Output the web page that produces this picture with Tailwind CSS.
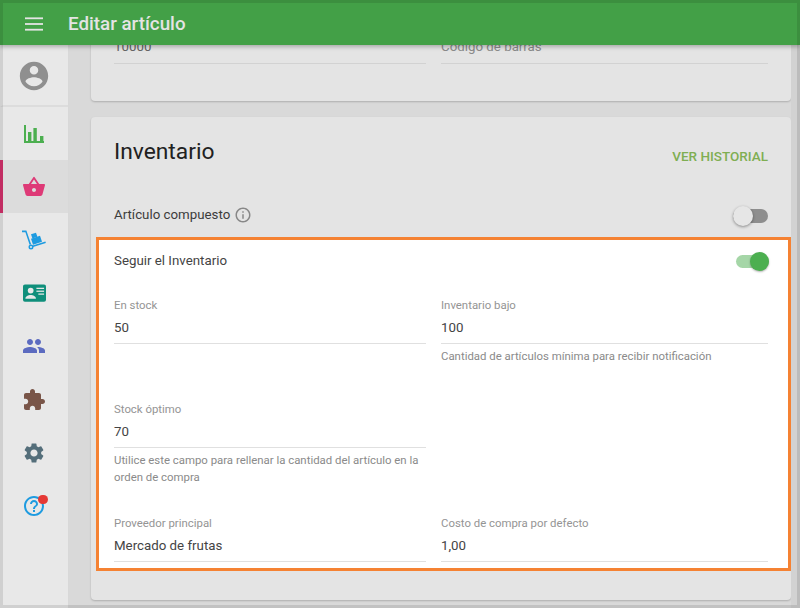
<!DOCTYPE html>
<html lang="es">
  <head>
    <meta charset="UTF-8" />
    <title>Editar artículo</title>
    <script src="https://cdn.jsdelivr.net/npm/@tailwindcss/browser@4"></script>
  </head>
  <body class="overflow-hidden">
    <div class="relative w-[800px] h-[608px] overflow-hidden bg-[#d9d9d9] font-['Roboto',sans-serif] text-[#212121]">
      <!-- Top bar -->
      <header class="relative z-10 h-[45px] pt-[3px] flex items-center bg-[#43a047] shadow-[0_2px_4px_rgba(0,0,0,0.25)]">
        <svg class="ml-[25px] w-[18px] h-[18px] text-[#e4e4e4]" viewBox="0 0 18 18" fill="currentColor">
          <rect x="0" y="2.4" width="18" height="1.8"></rect>
          <rect x="0" y="8.1" width="18" height="1.8"></rect>
          <rect x="0" y="13.8" width="18" height="1.8"></rect>
        </svg>
        <h1 class="ml-[25px] text-[18.8px] font-medium text-[#e4e4e4]">Editar artículo</h1>
      </header>

      <div class="flex h-[563px]">
        <!-- Sidebar -->
        <nav class="w-[69px] shrink-0 bg-[#e8e8e8] border-r border-[#d8d8d8] flex flex-col">
          <div class="h-[62px] pt-[2px] pr-[3px] flex items-center justify-center border-l-[3px] border-l-transparent border-b-2 border-b-[#dcdcdc]">
            <svg class="w-[34px] h-[34px] text-[#8f8f8f]" viewBox="0 0 24 24" fill="currentColor">
              <path d="M12 2C6.48 2 2 6.48 2 12s4.48 10 10 10 10-4.48 10-10S17.52 2 12 2zm0 3c1.66 0 3 1.34 3 3s-1.34 3-3 3-3-1.34-3-3 1.34-3 3-3zm0 14.2c-2.5 0-4.71-1.28-6-3.22.03-1.99 4-3.08 6-3.08 1.99 0 5.97 1.09 6 3.08-1.29 1.94-3.5 3.22-6 3.22z"></path>
            </svg>
          </div>
          <div class="h-[53.2px] pr-[3px] flex items-center justify-center border-l-[3px] border-l-transparent">
            <svg class="w-[20px] h-[18px] text-[#4caf50]" viewBox="0 0 20 18" fill="currentColor">
              <path d="M0 0h2v16h18v2H0z"></path>
              <rect x="4" y="7" width="3.4" height="10"></rect>
              <rect x="9.4" y="3" width="3.4" height="14"></rect>
              <rect x="16" y="11" width="3.4" height="6"></rect>
            </svg>
          </div>
          <div class="h-[53.2px] pr-[3px] flex items-center justify-center bg-[#dcdcdc] border-l-[3px] border-l-[#d9336f]">
            <svg class="w-[24px] h-[24px] text-[#de3a77]" viewBox="0 0 24 24" fill="currentColor">
              <path d="M17.21 9l-4.38-6.56a1 1 0 0 0-1.66 0L6.79 9H2c-.55 0-1 .45-1 1l.04.27 2.54 9.27c.23.84 1 1.46 1.92 1.46h13c.92 0 1.69-.62 1.93-1.46l2.54-9.27L23 10c0-.55-.45-1-1-1h-4.79zM9 9l3-4.4L15 9H9zm3 8c-1.1 0-2-.9-2-2s.9-2 2-2 2 .9 2 2-.9 2-2 2z"></path>
            </svg>
          </div>
          <div class="h-[53.2px] pr-[3px] flex items-center justify-center border-l-[3px] border-l-transparent">
            <svg class="w-[24px] h-[20px] text-[#1e9be0]" viewBox="0 0 24 20" fill="currentColor">
              <path d="M0 .6h4.4l4.7 13.6-1.5.5L3.4 2.2H0z"></path>
              <path d="M9 8.8l9-3 2 6-9 3z"></path>
              <path d="M9 4.3l5-1.6 1.4 4-5 1.7z"></path>
              <path d="M10.6 15.4L23.4 11.6l.5 1.5-12.8 3.8z"></path>
              <path fill-rule="evenodd" d="M9 14.6a2.5 2.5 0 1 1 0 5 2.5 2.5 0 0 1 0-5zm0 1.5a1 1 0 1 0 0 2 1 1 0 0 0 0-2z"></path>
            </svg>
          </div>
          <div class="h-[53.2px] pr-[3px] flex items-center justify-center border-l-[3px] border-l-transparent">
            <svg class="w-[23px] h-[18px]" viewBox="0 0 24 18">
              <rect width="24" height="18" rx="2" fill="#0f8f7b"></rect>
              <circle cx="8" cy="6.5" r="3" fill="#e8e8e8"></circle>
              <path d="M2.5 15c0-2.6 3-3.8 5.5-3.8s5.5 1.2 5.5 3.8z" fill="#e8e8e8"></path>
              <rect x="14" y="3.5" width="8" height="1.3" fill="#e8e8e8"></rect>
              <rect x="14" y="6.5" width="8" height="1.3" fill="#e8e8e8"></rect>
              <rect x="16" y="9.5" width="6" height="1.3" fill="#e8e8e8"></rect>
            </svg>
          </div>
          <div class="h-[53.2px] pr-[3px] flex items-center justify-center border-l-[3px] border-l-transparent">
            <svg class="w-[24px] h-[24px] text-[#5c6bc0]" viewBox="0 0 24 24" fill="currentColor">
              <path d="M16 11c1.66 0 2.99-1.34 2.99-3S17.66 5 16 5s-3 1.34-3 3 1.34 3 3 3zm-8 0c1.66 0 2.99-1.34 2.99-3S9.66 5 8 5 5 6.34 5 8s1.34 3 3 3zm0 2c-2.33 0-7 1.17-7 3.5V19h14v-2.5c0-2.33-4.67-3.5-7-3.5zm8 0c-.29 0-.62.02-.97.05 1.16.84 1.97 1.97 1.97 3.45V19h6v-2.5c0-2.33-4.67-3.5-7-3.5z"></path>
            </svg>
          </div>
          <div class="h-[53.2px] pr-[3px] flex items-center justify-center border-l-[3px] border-l-transparent">
            <svg class="w-[24px] h-[24px] text-[#795548]" viewBox="0 0 24 24" fill="currentColor">
              <path d="M20.5 11H19V7c0-1.1-.9-2-2-2h-4V3.5C13 2.12 11.88 1 10.5 1S8 2.12 8 3.5V5H4c-1.1 0-1.99.9-1.99 2v3.8H3.5c1.49 0 2.7 1.21 2.7 2.7s-1.21 2.7-2.7 2.7H2V20c0 1.1.9 2 2 2h3.8v-1.5c0-1.49 1.21-2.7 2.7-2.7 1.49 0 2.7 1.21 2.7 2.7V22H17c1.1 0 2-.9 2-2v-4h1.5c1.38 0 2.5-1.12 2.5-2.5S21.88 11 20.5 11z"></path>
            </svg>
          </div>
          <div class="h-[53.2px] pr-[3px] flex items-center justify-center border-l-[3px] border-l-transparent">
            <svg class="w-[24px] h-[24px] text-[#546e7a]" viewBox="0 0 24 24" fill="currentColor">
              <path d="M19.14 12.94c.04-.3.06-.61.06-.94 0-.32-.02-.64-.07-.94l2.03-1.58a.49.49 0 0 0 .12-.61l-1.92-3.32a.488.488 0 0 0-.59-.22l-2.39.96c-.5-.38-1.03-.7-1.62-.94l-.36-2.54a.484.484 0 0 0-.48-.41h-3.84c-.24 0-.43.17-.47.41l-.36 2.54c-.59.24-1.13.57-1.62.94l-2.39-.96c-.22-.08-.47 0-.59.22L2.74 8.87c-.12.21-.08.47.12.61l2.03 1.58c-.05.3-.09.63-.09.94s.02.64.07.94l-2.03 1.58a.49.49 0 0 0-.12.61l1.92 3.32c.12.22.37.29.59.22l2.39-.96c.5.38 1.03.7 1.62.94l.36 2.54c.05.24.24.41.48.41h3.84c.24 0 .44-.17.47-.41l.36-2.54c.59-.24 1.13-.56 1.62-.94l2.39.96c.22.08.47 0 .59-.22l1.92-3.32c.12-.22.07-.47-.12-.61l-2.01-1.58zM12 15.6c-1.98 0-3.6-1.62-3.6-3.6s1.62-3.6 3.6-3.6 3.6 1.62 3.6 3.6-1.62 3.6-3.6 3.6z"></path>
            </svg>
          </div>
          <div class="h-[53.2px] pr-[3px] flex items-center justify-center border-l-[3px] border-l-transparent">
            <div class="relative w-[24px] h-[24px]">
              <svg class="w-[24px] h-[24px] text-[#1e9be0]" viewBox="0 0 24 24" fill="currentColor">
                <path d="M11 18h2v-2h-2v2zm1-16C6.48 2 2 6.48 2 12s4.48 10 10 10 10-4.48 10-10S17.52 2 12 2zm0 18c-4.41 0-8-3.59-8-8s3.59-8 8-8 8 3.59 8 8-3.59 8-8 8zm0-14c-2.21 0-4 1.79-4 4h2c0-1.1.9-2 2-2s2 .9 2 2c0 2-3 1.75-3 5h2c0-2.25 3-2.5 3-5 0-2.21-1.79-4-4-4z"></path>
              </svg>
              <span class="absolute top-[1px] right-[-1.5px] w-[9.5px] h-[9.5px] rounded-full bg-[#e53935]"></span>
            </div>
          </div>
        </nav>

        <!-- Content -->
        <main class="w-[722px] h-[563px] overflow-hidden pl-[22px]">
          <section class="mt-[-50px] w-[700px] h-[106px] rounded bg-[#e4e4e4] shadow-[0_1px_2px_rgba(0,0,0,0.2)] px-[23px] pt-[40px]">
            <div class="grid grid-cols-[312px_327px] gap-x-[15px]">
              <div class="h-[29px] border-b border-[#d2d2d2] text-[13.3px] leading-[24px] text-[#666]">10000</div>
              <div class="h-[29px] border-b border-[#d2d2d2] text-[13.3px] leading-[24px] text-[#8a8a8a]">Código de barras</div>
            </div>
          </section>

          <section class="mt-[16px] w-[700px] h-[483px] rounded bg-[#e4e4e4] shadow-[0_1px_2px_rgba(0,0,0,0.2)]">
            <div class="flex items-center justify-between h-[78px] px-[23px]">
              <h2 class="text-[22.8px] leading-[28px] mt-[-8px] text-[#212121]">Inventario</h2>
              <a class="text-[13.5px] font-medium text-[#7fae52]">VER HISTORIAL</a>
            </div>
            <div class="flex items-center justify-between h-[42px] px-[23px]">
              <div class="flex items-center gap-[4px] mt-[-2px] text-[13.3px] text-[#3c3c3c]">
                Artículo compuesto
                <svg class="w-[18px] h-[18px] text-[#888]" viewBox="0 0 24 24" fill="currentColor">
                  <path d="M11 7h2v2h-2zm0 4h2v6h-2zm1-9C6.48 2 2 6.48 2 12s4.48 10 10 10 10-4.48 10-10S17.52 2 12 2zm0 18c-4.41 0-8-3.59-8-8s3.59-8 8-8 8 3.59 8 8-3.59 8-8 8z"></path>
                </svg>
              </div>
              <div class="relative w-[35px] h-[14px] rounded-full bg-[#8e8e8e]">
                <span class="absolute left-0 top-[-3px] w-[20px] h-[20px] rounded-full bg-[#e6e6e6] shadow-[0_1px_3px_rgba(0,0,0,0.4)]"></span>
              </div>
            </div>

            <!-- Highlighted block -->
            <div class="ml-[5px] h-[334px] bg-white border-[3px] border-[#f58233] pl-[15px] pr-[20px]">
              <div class="flex items-center justify-between h-[41px]">
                <span class="text-[13.3px] text-[#444]">Seguir el Inventario</span>
                <div class="relative mt-[2px] w-[33px] h-[13px] mr-[-1px] rounded-full bg-[#a5d6a7]">
                  <span class="absolute right-0 top-[-3px] w-[19px] h-[19px] rounded-full bg-[#4caf50] shadow-[0_1px_2px_rgba(0,0,0,0.3)]"></span>
                </div>
              </div>
              <div class="grid grid-cols-[312px_327px] gap-x-[15px] mt-[16px]">
                <div class="h-[104px]">
                  <div class="text-[11.4px] leading-[16px] text-[#949494]">En stock</div>
                  <div class="mt-[5px] h-[26px] border-b border-[#e0e0e0] text-[13.3px] leading-[20px] text-[#444]">50</div>
                </div>
                <div class="h-[104px]">
                  <div class="text-[11.4px] leading-[16px] text-[#949494]">Inventario bajo</div>
                  <div class="mt-[5px] h-[26px] border-b border-[#e0e0e0] text-[13.3px] leading-[20px] text-[#444]">100</div>
                  <p class="mt-[4px] text-[11.4px] leading-[17px] text-[#8a8a8a]">Cantidad de artículos mínima para recibir notificación</p>
                </div>
                <div class="h-[114px]">
                  <div class="text-[11.4px] leading-[16px] text-[#949494]">Stock óptimo</div>
                  <div class="mt-[5px] h-[26px] border-b border-[#e0e0e0] text-[13.3px] leading-[20px] text-[#444]">70</div>
                  <p class="mt-[4px] text-[11.4px] leading-[17px] text-[#8a8a8a]">Utilice este campo para rellenar la cantidad del artículo en la orden de compra</p>
                </div>
                <div class="h-[114px]"></div>
                <div>
                  <div class="text-[11.4px] leading-[16px] text-[#949494]">Proveedor principal</div>
                  <div class="mt-[5px] h-[26px] border-b border-[#e0e0e0] text-[13.3px] leading-[20px] text-[#444]">Mercado de frutas</div>
                </div>
                <div>
                  <div class="text-[11.4px] leading-[16px] text-[#949494]">Costo de compra por defecto</div>
                  <div class="mt-[5px] h-[26px] border-b border-[#e0e0e0] text-[13.3px] leading-[20px] text-[#444]">1,00</div>
                </div>
              </div>
            </div>
          </section>
        </main>
        <!-- Strip right of the cards -->
        <div class="w-[9px] bg-[#d2d2d2]"></div>
      </div>

      <!-- Darker frame over the whole window -->
      <div class="absolute inset-0 z-20 border-[3px] border-black/10"></div>
    </div>
  </body>
</html>
